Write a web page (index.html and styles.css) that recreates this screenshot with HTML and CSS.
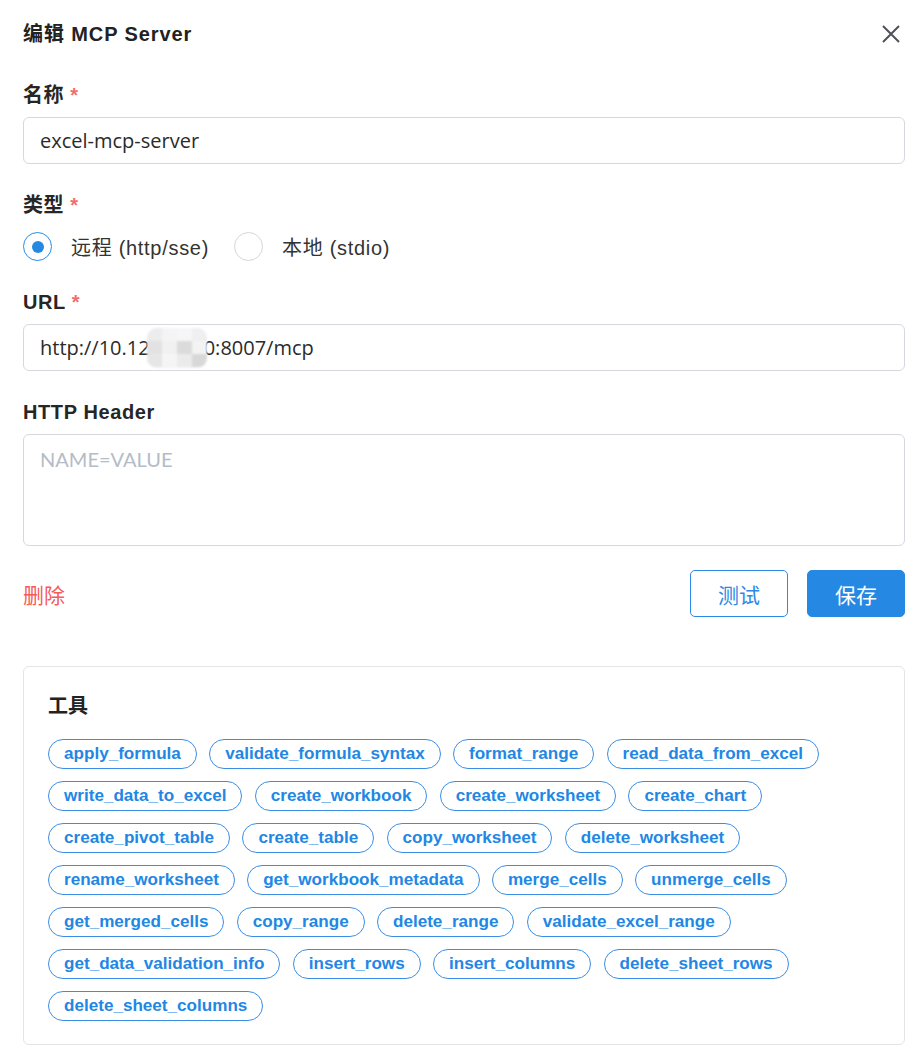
FILE: index.html
```html
<!DOCTYPE html>
<html lang="zh-CN">
<head>
<meta charset="utf-8">
<title>编辑 MCP Server</title>
<link rel="stylesheet" href="styles.css">
</head>
<body>
<div class="dialog">
  <header class="head">
    <h1 class="title">编辑 MCP Server</h1>
    <button class="close" aria-label="关闭">
      <svg width="18" height="18" viewBox="0 0 18 18"><path d="M1 1L17 17M17 1L1 17" stroke="#4d5259" stroke-width="2" fill="none" stroke-linecap="butt"/></svg>
    </button>
  </header>

  <div class="field first">
    <div class="label">名称 <span class="req">*</span></div>
    <div class="input">excel-mcp-server</div>
  </div>

  <div class="field">
    <div class="label">类型 <span class="req">*</span></div>
    <div class="radios">
      <div class="radio-opt"><span class="radio checked"><span class="dot"></span></span><span class="radio-text">远程 (http/sse)</span></div>
      <div class="radio-opt"><span class="radio"></span><span class="radio-text">本地 (stdio)</span></div>
    </div>
  </div>

  <div class="field">
    <div class="label">URL <span class="req">*</span></div>
    <div class="input">http://10.12<span class="mosaic"><i class="m1"></i><i class="m2"></i><i class="m3"></i><i class="m4"></i><i class="m5"></i><i class="m6"></i><i class="m7"></i><i class="m8"></i><i class="m9"></i><i class="m10"></i><i class="m11"></i><i class="m12"></i></span>0:8007/mcp</div>
  </div>

  <div class="field">
    <div class="label">HTTP Header</div>
    <div class="textarea"><span class="placeholder">NAME=VALUE</span></div>
  </div>

  <div class="actions">
    <span class="delete">删除</span>
    <div class="btns">
      <button class="btn btn-outline">测试</button>
      <button class="btn btn-primary">保存</button>
    </div>
  </div>

  <section class="card">
    <h2 class="card-title">工具</h2>
    <div class="tags">
      <span class="tag">apply_formula</span>
      <span class="tag">validate_formula_syntax</span>
      <span class="tag">format_range</span>
      <span class="tag">read_data_from_excel</span>
      <span class="tag">write_data_to_excel</span>
      <span class="tag">create_workbook</span>
      <span class="tag">create_worksheet</span>
      <span class="tag">create_chart</span>
      <span class="tag">create_pivot_table</span>
      <span class="tag">create_table</span>
      <span class="tag">copy_worksheet</span>
      <span class="tag">delete_worksheet</span>
      <span class="tag">rename_worksheet</span>
      <span class="tag">get_workbook_metadata</span>
      <span class="tag">merge_cells</span>
      <span class="tag">unmerge_cells</span>
      <span class="tag">get_merged_cells</span>
      <span class="tag">copy_range</span>
      <span class="tag">delete_range</span>
      <span class="tag">validate_excel_range</span>
      <span class="tag">get_data_validation_info</span>
      <span class="tag">insert_rows</span>
      <span class="tag">insert_columns</span>
      <span class="tag">delete_sheet_rows</span>
      <span class="tag">delete_sheet_columns</span>
    </div>
  </section>
</div>
</body>
</html>
```

FILE: styles.css
```css
* { box-sizing: border-box; }

html, body {
  margin: 0;
  padding: 0;
  background: #ffffff;
}

body {
  font-family: "Liberation Sans", "Noto Sans CJK SC", sans-serif;
  color: #262626;
}

.dialog {
  padding: 20px 16px 14px 23px;
}

.head {
  display: flex;
  justify-content: space-between;
  align-items: center;
  height: 28px;
}

.title {
  margin: 0;
  font-size: 20px;
  line-height: 28px;
  font-weight: 700;
  letter-spacing: 0.9px;
  color: #222222;
}

.close {
  width: 18px;
  height: 18px;
  padding: 0;
  margin-right: 5px;
  border: 0;
  background: none;
  display: flex;
}

.field { margin-top: 27px; }
.field.first { margin-top: 33px; }

.label {
  font-size: 20px;
  line-height: 28px;
  font-weight: 700;
  letter-spacing: 0.6px;
  color: #262626;
  margin-bottom: 8px;
}

.req {
  color: #f56c6c;
  font-weight: 700;
  letter-spacing: 0;
}

.input {
  height: 47px;
  border: 1px solid #d5d8dd;
  border-radius: 6px;
  padding: 0 16px;
  display: flex;
  align-items: center;
  font-family: "Open Sans", "Noto Sans CJK SC", sans-serif;
  font-size: 20px;
  color: #2b2b2b;
  white-space: pre;
}

.mosaic {
  position: relative;
  z-index: 1;
  display: inline-grid;
  grid-template-columns: repeat(4, 1fr);
  grid-template-rows: repeat(3, 1fr);
  width: 60px;
  height: 40px;
  margin: 0 -3px 0 -3px;
  border-radius: 10px;
  overflow: hidden;
  filter: blur(1px);
  background: #f2f2f2;
}
.mosaic i { display: block; }
.m1 { background: #ececec; }
.m2 { background: #f4f4f4; }
.m3 { background: #f6f6f6; }
.m4 { background: #efefef; }
.m5 { background: #e2e2e2; }
.m6 { background: #f1f1f1; }
.m7 { background: #dbdbdb; }
.m8 { background: #f3f3f3; }
.m9 { background: #e6e6e6; }
.m10 { background: #f5f5f5; }
.m11 { background: #ebebeb; }
.m12 { background: #d8d8d8; }

.radios {
  display: flex;
  align-items: center;
  gap: 25px;
  margin-top: 13px;
}

.radio-opt {
  display: flex;
  align-items: center;
  gap: 19px;
}

.radio {
  width: 29px;
  height: 29px;
  border: 1px solid #d3d6db;
  border-radius: 50%;
  display: flex;
  align-items: center;
  justify-content: center;
}
.radio.checked { border-color: #2b8ae5; }
.dot {
  width: 12px;
  height: 12px;
  border-radius: 50%;
  background: #2589e3;
}

.radio-text {
  font-size: 20px;
  letter-spacing: 0.7px;
  color: #333333;
}

.textarea {
  height: 112px;
  border: 1px solid #d5d8dd;
  border-radius: 6px;
  padding: 11px 16px;
}
.placeholder {
  font-family: "Lato", sans-serif;
  font-size: 20px;
  line-height: 26px;
  color: #b4bcc6;
}

.actions {
  margin-top: 24px;
  display: flex;
  justify-content: space-between;
  align-items: center;
}

.delete {
  font-family: "Noto Sans CJK SC", sans-serif;
  font-size: 21px;
  color: #f45b5b;
}

.btns {
  display: flex;
  gap: 19px;
}

.btn {
  width: 98px;
  height: 47px;
  border-radius: 5px;
  font-family: "Noto Sans CJK SC", sans-serif;
  font-size: 21px;
  padding: 0;
  cursor: pointer;
}
.btn-outline {
  background: #ffffff;
  border: 1px solid #2b8ae5;
  color: #2b8ae5;
}
.btn-primary {
  background: #2589e3;
  border: 1px solid #2589e3;
  color: #ffffff;
}

.card {
  margin-top: 49px;
  border: 1px solid #e2e4e8;
  border-radius: 6px;
  padding: 25px 24px 23px 24px;
}

.card-title {
  margin: 0 0 19px 0;
  font-size: 20px;
  line-height: 28px;
  font-weight: 700;
  color: #222222;
}

.tags {
  display: flex;
  flex-wrap: wrap;
  gap: 12px 12.3px;
}

.tag {
  height: 30px;
  line-height: 28px;
  padding: 0 15px;
  border: 1px solid #3a8ee6;
  border-radius: 15px;
  font-size: 17.1px;
  font-weight: 700;
  color: #2287e4;
  white-space: nowrap;
}
```
